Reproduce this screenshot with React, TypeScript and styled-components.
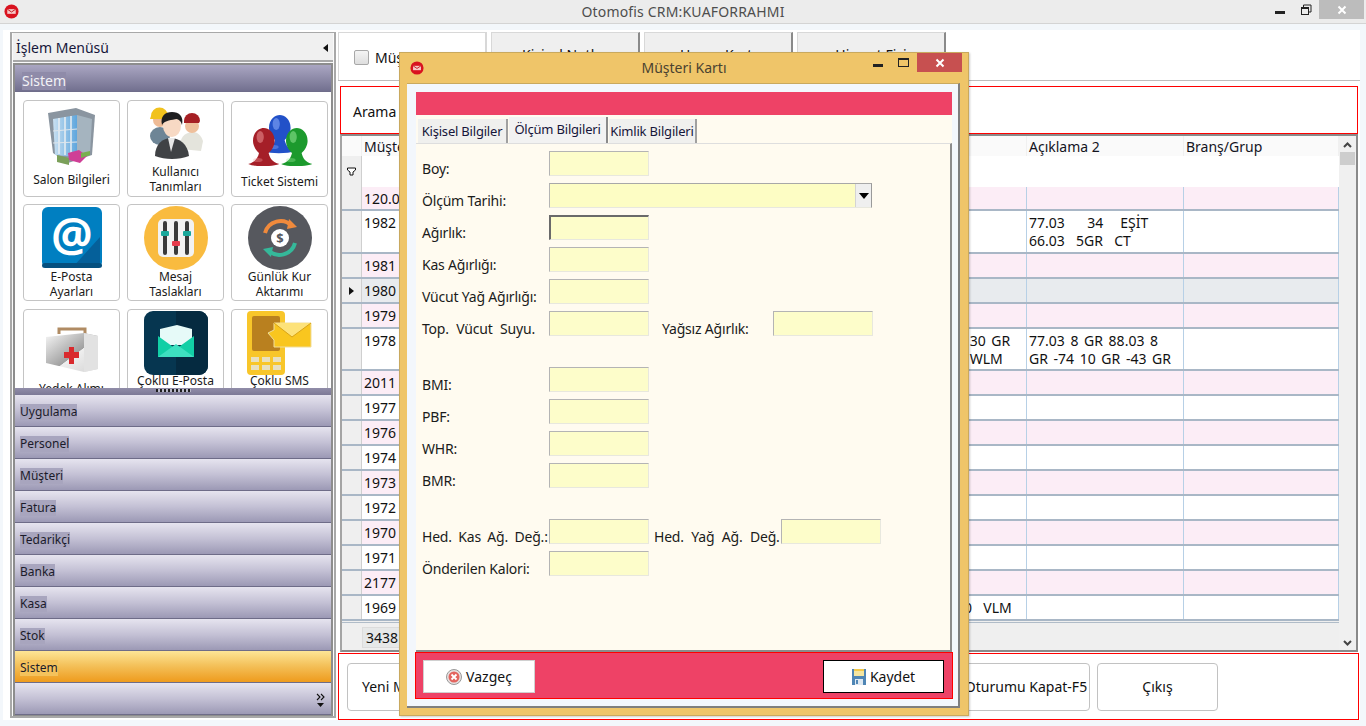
import React from "react";
import styled, { createGlobalStyle } from "styled-components";

const Global = createGlobalStyle`
  html, body { margin: 0; padding: 0; background: #f3f7fb; overflow: hidden; }
  * { box-sizing: border-box; }
  #root { width: 1366px; height: 726px; }
`;

const FONT = `"Noto Sans", "Open Sans", "DejaVu Sans", sans-serif`;

const Desktop = styled.div`
  position: relative; width: 1366px; height: 726px; overflow: hidden;
  background: #f3f7fb; color: #111; font: 14px/18px ${FONT};
`;
const TitleBar = styled.div`
  height: 24px; background: #ececec; border-bottom: 1px solid #d4d4d4;
  display: flex; align-items: center; position: relative; padding-left: 4px;
`;
const TitleText = styled.div`
  position: absolute; left: 0; right: 0; top: 3px; text-align: center; color: #4e4e4e; font-size: 14px; line-height: 18px; letter-spacing: 0.18px;
`;
const WinControls = styled.div`
  position: absolute; right: 2px; top: 0; display: flex; align-items: flex-start;
`;
const CtlBtn = styled.div<{ $w: number; $bg?: string }>`
  width: ${p => p.$w}px; height: 19px; background: ${p => p.$bg || "transparent"};
  display: flex; align-items: center; justify-content: center;
`;
const Panel = styled.div`
  position: absolute; left: 3px; top: 30px; width: 1357px; height: 690px; background: #fff;
  display: flex; gap: 2px; padding: 2px 0 0 7px;
`;

/* sidebar */
const Sidebar = styled.div`
  width: 326px; height: 686px; border: 2px solid #a8a8a8; border-top-width: 1px; padding: 0 1px;
  display: flex; flex-direction: column; background: #fafafa;
`;
const MenuHead = styled.div`
  height: 29px; background: #f0f0f0; display: flex; align-items: center; justify-content: space-between;
  padding: 2px 4px 0 3px; font-size: 14px; color: #16163a; border-bottom: 2px solid #a8a8a8;
`;
const MenuInner = styled.div`
  flex: none; margin-top: 1px; height: 653px; width: 320px; border: 2px solid #8d8d8d; border-bottom-width: 1px;
  display: flex; flex-direction: column; overflow: hidden; background: #fff;
`;
const GroupHead = styled.div`
  height: 27px; flex: none; padding: 5px 0 0 7px; display: flex; align-items: center;
  background: linear-gradient(#aaa6c2, #72708f); border-bottom: 1px solid #6f6d8a;
`;
const GroupLabel = styled.span`
  background: #8f8ba9; color: #f2f2f6; font-size: 14px; line-height: 18px;
`;
const IconArea = styled.div`
  height: 296px; flex: none; overflow: hidden; background: #fff; padding: 8px 0 0 8px;
  display: grid; grid-template-columns: repeat(3, 97px); grid-auto-rows: 97px; gap: 7px;
`;
const IconCard = styled.div<{ $shift?: number }>`
  border: 1px solid #c4c4c4; border-radius: 4px; background: #fff;
  display: flex; flex-direction: column; align-items: center;
  margin-top: ${p => p.$shift || 0}px; height: ${p => (p.$shift === 1 ? 96 : 97)}px;
  font-size: 12px; line-height: 15px; color: #1a1a1a; text-align: center;
`;
const IconSlot = styled.div<{ $top: number; $h: number }>`
  margin-top: ${p => p.$top}px; height: ${p => p.$h}px; flex: none; display: flex; justify-content: center;
`;
const GripBar = styled.div`
  height: 7px; flex: none; background: linear-gradient(#918da9, #7c7996); display: flex; justify-content: center; align-items: flex-start; padding-top: 1px;
`;
const GripDots = styled.div`
  width: 35px; height: 3px;
  background: repeating-linear-gradient(90deg, #1e1e1e 0 2px, #b8b8c8 2px 4px);
`;
const NavRow = styled.div<{ $active?: boolean }>`
  height: 32px; flex: none; display: flex; align-items: center; justify-content: space-between;
  padding: 2px 6px 0 5px; font-size: 12px; color: #1b1b2a;
  background: ${p => p.$active ? "linear-gradient(#fee596, #f4c25c 45%, #ee9b1d)" : "linear-gradient(#e6e4ef, #c4c1d5 50%, #9c99b5)"};
  border-bottom: 1px solid #6e6c88;
`;
const NavLabel = styled.span<{ $active?: boolean }>`
  background: ${p => p.$active ? "#f4c25c" : "#a8a5be"}; line-height: 16px;
`;

/* main */
const Main = styled.div`
  width: 1022px; height: 688px; display: flex; flex-direction: column; background: #fff;
`;
const TabRow = styled.div`
  height: 49px; flex: none; display: flex; gap: 4px; border-bottom: 1px solid #bdbdbd; padding-left: 0;
`;
const PageTab = styled.div<{ $active?: boolean }>`
  width: 149px; height: 48px; display: flex; align-items: center; gap: 6px; font-size: 14px;
  padding: ${p => p.$active ? "2px 0 0 15px" : "0 0 4px 0"};
  background: ${p => p.$active ? "#fff" : "#efefef"};
  border: 1px solid #d8d8d8; border-right: 2px solid ${p => p.$active ? "#d8d8d8" : "#8a8a8a"}; border-bottom: none;
  justify-content: ${p => p.$active ? "flex-start" : "center"};
`;
const CheckBox = styled.span`
  width: 15px; height: 15px; background: linear-gradient(#f4f4f4, #dedede); border: 1px solid #a8a8a8; border-radius: 2px;
`;
const SearchBox = styled.div`
  height: 48px; margin: 5px 2px 0 2px; flex: none; border: 1px solid #f00; padding: 16px 0 0 12px; font-size: 14px;
`;
const GridFrame = styled.div`
  height: 518px; width: 1018px; margin-left: 2px; flex: none; display: flex;
  border: 2px solid #8a8a8a; border-left-color: #a4a4a4; background: #efefef;
`;
const GridBody = styled.div`
  width: 997px; flex: none; display: flex; flex-direction: column; background: #efefef;
`;
const columns = "20px 48px 552px 65px 157px 155px";
const HeadRow = styled.div`
  height: 20px; flex: none; display: grid; grid-template-columns: ${columns}; background: #fafafa;
`;
const HeadCell = styled.div`
  padding: 2px 2px 0; font-size: 14px; line-height: 18px; white-space: nowrap; overflow: hidden; color: #14141e;
  border-right: 1px solid #f0f0f0;
`;
const FilterRow = styled.div`
  height: 31px; flex: none; display: grid; grid-template-columns: ${columns}; background: #fff;
`;
const IndicatorCell = styled.div`
  background: #efefef; border-right: 1px solid #cfcfcf; display: flex; align-items: center; justify-content: center;
`;
const DataRow = styled.div<{ $h: number; $pink?: boolean; $sel?: boolean }>`
  height: ${p => p.$h}px; flex: none; display: grid; grid-template-columns: ${columns};
  background: ${p => p.$sel ? "#e8ebee" : p.$pink ? "#fcedf6" : "#fff"};
  border-bottom: 2px solid #a9b7c6;
`;
const DataCell = styled.div`
  padding: 3px 2px 0; font-size: 14px; line-height: 18px; white-space: pre-wrap; color: #111; word-spacing: 2px;
  border-right: 1px solid #b7d0e6;
`;
const FootRow = styled.div`
  flex: 1; margin-top: 1px; border-top: 1px solid #b0bcc8; padding: 4px 0 0 20px; background: #efefef;
`;
const FootCell = styled.div`
  width: 41px; height: 21px; background: #e6e8e8; border: 1px solid #dcdcdc; padding: 1px 0 0 3px; font-size: 14px; line-height: 18px;
`;
const ScrollBar = styled.div`
  flex: 1; background: #f0f0f0; position: relative; display: flex; flex-direction: column; align-items: center;
  justify-content: space-between; padding: 6px 0 4px;
`;
const ScrollThumb = styled.div`
  position: absolute; top: 16px; left: 1px; width: 15px; height: 13px; background: #cdcdcd;
`;
const BottomBar = styled.div`
  height: 67px; flex: none; margin-top: 1px; border: 1px solid #f00; display: flex; gap: 7px; padding: 9px 0 0 8px; width: 1021px;
`;
const ActionBtn = styled.div<{ $w: number; $left?: boolean }>`
  width: ${p => p.$w}px; height: 48px; border: 1px solid #c2c2c2; border-radius: 4px; background: #fff;
  display: flex; align-items: center; justify-content: ${p => p.$left ? "flex-start" : "center"};
  padding-left: ${p => p.$left ? 14 : 0}px; font-size: 14px; white-space: nowrap; overflow: hidden;
`;

/* dialog */
const Dialog = styled.div`
  position: absolute; left: 399px; top: 52px; width: 570px; height: 664px; background: #efc569;
  border: 1px solid #c9a95e; box-shadow: 1px 1px 2px rgba(0,0,0,.2); display: flex; flex-direction: column;
`;
const DlgTitle = styled.div`
  height: 30px; flex: none; position: relative; display: flex; align-items: center; padding-left: 10px;
`;
const DlgTitleText = styled.div`
  position: absolute; left: 0; right: 0; top: 6px; text-align: center; color: #4a4230; font-size: 14px; line-height: 18px;
`;
const DlgControls = styled.div`
  position: absolute; right: 6px; top: 0; display: flex;
`;
const Client = styled.div`
  width: 553px; height: 625px; margin-left: 7px; background: #f3f7fc; display: flex; flex-direction: column;
  padding: 8px 6px 7px 9px; border-right: 2px solid #7f7f7f; border-bottom: 2px solid #7f7f7f; border-top: 1px solid #c9a95e;
`;
const RedBand = styled.div`
  height: 23px; flex: none; background: #ee4266;
`;
const Cream = styled.div`
  flex: 1; background: #fffbf0; display: flex; flex-direction: column;
`;
const DlgTabs = styled.div`
  height: 28px; flex: none; display: flex; align-items: flex-end; padding-left: 2px; gap: 1px;
`;
const DlgTab = styled.div<{ $w: number; $active?: boolean }>`
  width: ${p => p.$w}px; height: ${p => p.$active ? 26 : 24}px; font-size: 13px; line-height: 24px; letter-spacing: -0.2px; text-align: center;
  background: ${p => p.$active ? "#f2f2f2" : "#f0f0ee"}; color: #16163a; white-space: nowrap;
  border-right: 2px solid ${p => p.$active ? "#8a8a8a" : "#a0a0a0"};
`;
const Form = styled.div`
  flex: 1; border-top: 1px solid #dedede; border-right: 2px solid #8c8c8c; border-bottom: 2px solid #8c8c8c;
  padding: 7px 0 0 6px; display: flex; flex-direction: column; gap: 7px;
`;
const FieldRow = styled.div<{ $gapTop?: number }>`
  height: 25px; flex: none; display: flex; align-items: flex-start; margin-top: ${p => p.$gapTop || 0}px;
`;
const FieldLabel = styled.div<{ $w?: number; $ml?: number; $ws?: number }>`
  width: ${p => p.$w || 127}px; margin-left: ${p => p.$ml || 0}px; flex: none; font-size: 14px; line-height: 18px; padding-top: 9px;
  color: #1b1b1b; white-space: nowrap; letter-spacing: -0.2px; word-spacing: ${p => p.$ws || 0}px;
`;
const FieldInput = styled.div<{ $focus?: boolean }>`
  width: 100px; height: 25px; flex: none; background: #fdfdca;
  border-top: ${p => p.$focus ? "2px solid #6a6a6a" : "1px solid #b4b4b4"};
  border-left: ${p => p.$focus ? "2px solid #6a6a6a" : "1px solid #b4b4b4"};
  border-right: 1px solid #e8e8de; border-bottom: 1px solid #e8e8de;
`;
const FieldSelect = styled.div`
  width: 323px; height: 25px; flex: none; background: #fdfdc4; display: flex; justify-content: flex-end;
  border-top: 1px solid #a8a8a8; border-left: 1px solid #b4b4b4; border-right: 1px solid #9a9a9a; border-bottom: 1px solid #e8e8de;
`;
const SelectArrow = styled.div`
  width: 16px; background: #efefef; border-left: 1px solid #d4d4d4; display: flex; align-items: center; justify-content: center;
`;
const DlgFooter = styled.div`
  height: 47px; flex: none; margin: 0 -1px; background: #ee4266; border: 1px solid #f00;
  display: flex; justify-content: space-between; align-items: flex-start; padding: 7px 8px 0 7px;
`;
const DlgBtn = styled.div<{ $w: number; $strong?: boolean }>`
  width: ${p => p.$w}px; height: 33px; background: #fff; display: flex; align-items: center; justify-content: center; gap: 4px;
  font-size: 14px; color: #111; border: 1px solid ${p => p.$strong ? "#000" : "#d0d0d0"};
`;

/* drawings */
const AppLogo = ({ s = 15 }: { s?: number }) => (
  <svg width={s} height={s} viewBox="0 0 16 16">
    <circle cx="8" cy="8" r="7.5" fill="#d9121f" />
    <path d="M3.5 5.5h9v5h-9z" fill="#f6c8c8" />
    <path d="M3.5 5.5L8 8.5l4.500-3" fill="none" stroke="#c01018" strokeWidth="1" />
  </svg>
);
const MinIcon = () => <svg width="12" height="10"><rect x="1" y="6" width="10" height="3" fill="#222" /></svg>;
const RestoreIcon = () => (
  <svg width="12" height="12"><path d="M3.5 3V1h7.500v7H9" fill="none" stroke="#222" /><rect x="1.500" y="3.500" width="7" height="7" fill="none" stroke="#222" /><rect x="1" y="3" width="8" height="2" fill="#222" /></svg>
);
const MaxIcon = () => <svg width="12" height="10"><rect x=".5" y=".5" width="10" height="8" fill="none" stroke="#222" /><rect width="11" height="2" fill="#222" /></svg>;
const CloseIcon = () => <svg width="10" height="10"><path d="M1.500 1.500l7 7M8.500 1.500l-7 7" stroke="#fff" strokeWidth="2" /></svg>;

const SalonIcon = () => (
  <svg width="50" height="60" viewBox="0 0 50 60">
    <defs><linearGradient id="gl" x1="0" x2="1"><stop offset="0" stopColor="#c9e0f1" /><stop offset="1" stopColor="#5ea6dd" /></linearGradient></defs>
    <path d="M1 6L29 1l19 7-3 40-24 8L6 46z" fill="#8a95a0" />
    <path d="M6 12l24 -4 0 42-22 -2z" fill="url(#gl)" />
    <path d="M30 8l15 4-2 34-13 4z" fill="#a5b4bf" />
    <path d="M12 11v36M18 10v38M24 9v40" stroke="#e9eef2" strokeWidth="1.500" />
    <path d="M6 24l24-2M6 36l24-1" stroke="#dfe6ec" />
    <path d="M10 48l12 3v7l-12-3z" fill="#7ba05a" />
    <path d="M21 46l11-3 8 6-7 7-11-3z" fill="#cf3f96" />
    <path d="M34 46l9-2v4l-9 3z" fill="#79b04f" />
  </svg>
);
const UsersIcon = () => (
  <svg width="56" height="56" viewBox="0 0 56 56">
    <ellipse cx="12" cy="30" rx="10" ry="9" fill="#6e8596" />
    <circle cx="12" cy="14" r="7" fill="#eebb96" />
    <path d="M3 10a8 8 0 0 1 17 0l1 3H2z" fill="#f1c21e" />
    <path d="M33 34c2-6 8-8 12-8s8 3 10 9l-2 10-20-2z" fill="#e4e4dc" />
    <circle cx="44" cy="20" r="7" fill="#efc09c" />
    <path d="M36 15a8 8 0 0 1 16 0l-1 2H36z" fill="#a61f24" />
    <path d="M7 50c0-12 8-18 16-18s17 6 18 18c-10 4-24 4-34 0z" fill="#404245" />
    <path d="M20 32l3 14 4-14z" fill="#e8e8e8" />
    <ellipse cx="24" cy="20" rx="9" ry="11" fill="#f7d9c4" />
    <path d="M14 19c-2-9 3-13 10-13s12 4 10 13c-1-4-3-5-5-6-5 1-12 1-15 6z" fill="#1d1d1f" />
  </svg>
);
const TicketIcon = () => {
  const fig = (x: number, y: number, c: string, d: string) => (
    <g transform={`translate(${x} ${y}) scale(1.2 1)`}>
      <path d="M1 37c6-2 8-6 9-11-3-3-5-8-5-12C5 5 10 1 14 1s9 4 9 13c0 4-2 9-5 12 1 5 3 9 9 11-7 3-21 3-26 0z" fill={c} />
      <ellipse cx="11" cy="10" rx="3" ry="6" fill={d} opacity=".5" />
      <ellipse cx="9" cy="33" rx="4" ry="2" fill={d} opacity=".35" />
    </g>
  );
  return (
    <svg width="66" height="52" viewBox="0 0 66 52">
      {fig(16, 0, "#2251c8", "#9ab8ff")}
      {fig(0, 13, "#a51f28", "#f3a0a0")}
      {fig(33, 13, "#1c9a2d", "#a0eea0")}
    </svg>
  );
};
const AtIcon = () => (
  <svg width="60" height="61" viewBox="0 0 60 61">
    <rect width="60" height="61" rx="6" fill="#007fc1" />
    <path d="M30 61L58 30v25a6 6 0 0 1-6 6z" fill="#05609a" />
    <rect y="56" width="60" height="5" rx="3" fill="#05507f" />
    <text x="30" y="44" textAnchor="middle" fontFamily={FONT} fontSize="46" fontWeight="700" fill="#fff">@</text>
  </svg>
);
const MixerIcon = () => (
  <svg width="64" height="64" viewBox="0 0 64 64">
    <circle cx="32" cy="32" r="32" fill="#f9bb3f" />
    <rect x="14" y="13" width="36" height="38" rx="5" fill="#f2f2f2" />
    <path d="M21 17v30M32 17v30M43 17v30" stroke="#3a3a3a" strokeWidth="4" strokeLinecap="round" />
    <rect x="17" y="25" width="8" height="5" rx="1" fill="#19a79a" />
    <rect x="28" y="35" width="8" height="5" rx="1" fill="#e63b4d" />
    <rect x="39" y="25" width="8" height="5" rx="1" fill="#19a79a" />
  </svg>
);
const KurIcon = () => (
  <svg width="64" height="64" viewBox="0 0 64 64">
    <circle cx="32" cy="32" r="32" fill="#56585e" />
    <path d="M17 27a16 16 0 0 1 27-7" fill="none" stroke="#f08a3c" strokeWidth="4" />
    <path d="M41 13l8 8-10 2z" fill="#f08a3c" />
    <path d="M47 37a16 16 0 0 1-27 7" fill="none" stroke="#35b89a" strokeWidth="4" />
    <path d="M23 51l-8-8 10-2z" fill="#35b89a" />
    <circle cx="32" cy="32" r="9" fill="#fff" />
    <text x="32" y="37" textAnchor="middle" fontFamily={FONT} fontSize="13" fontWeight="700" fill="#56585e">$</text>
  </svg>
);
const AidIcon = () => (
  <svg width="54" height="48" viewBox="0 0 54 48">
    <defs><linearGradient id="ai" x1="0" y1="0" x2="1" y2="1"><stop offset="0" stopColor="#f7f7f7" /><stop offset=".55" stopColor="#a0a0a0" /><stop offset=".56" stopColor="#efefef" /><stop offset="1" stopColor="#d2d2d2" /></linearGradient></defs>
    <path d="M14 9V4h26v5" fill="none" stroke="#b08b63" strokeWidth="3" />
    <path d="M1 12l38-4 14 3v33l-14 3L1 38z" fill="url(#ai)" />
    <path d="M39 8v39l14-3V11z" fill="#e2e2e2" />
    <path d="M19 27h5v-5h5v5h5v6h-5v6h-5v-6h-5z" fill="#d92a2e" />
  </svg>
);
const MailTileIcon = () => (
  <svg width="64" height="64" viewBox="0 0 64 64">
    <rect width="64" height="64" rx="9" fill="#063650" />
    <path d="M32 0h23a9 9 0 0 1 9 9v46a9 9 0 0 1-9 9H32z" fill="#052a40" />
    <path d="M16 18l17-4 15 4v16H16z" fill="#e6faf8" />
    <path d="M14 25l18 13 18-13v21H14z" fill="#12cfa6" />
    <path d="M14 46l18-13 18 13z" fill="#3ee0c0" />
  </svg>
);
const SmsIcon = () => (
  <svg width="66" height="64" viewBox="0 0 66 64">
    <rect width="38" height="64" rx="4" fill="#f8c62a" />
    <rect x="5" y="5" width="28" height="35" rx="2" fill="#b9801f" />
    <rect x="4" y="46" width="8" height="5" fill="#e8e0c0" /><rect x="15" y="46" width="8" height="5" fill="#e8e0c0" /><rect x="26" y="46" width="8" height="5" fill="#e8e0c0" />
    <rect x="4" y="54" width="8" height="5" fill="#e8e0c0" /><rect x="15" y="54" width="8" height="5" fill="#e8e0c0" /><rect x="26" y="54" width="8" height="5" fill="#e8e0c0" />
    <path d="M21 22l6-3V12h37v24H27v-7z" fill="#f9c61f" stroke="#f0dd9a" />
    <path d="M27 12l18 14 19-14" fill="#fde27a" stroke="#d9a417" />
  </svg>
);
const FilterIcon = () => (
  <svg width="9" height="9" viewBox="0 0 9 9"><path d="M.5 1h8v2L6 5v3H3V5L.5 3z" fill="#fff" stroke="#111" /></svg>
);
const ArrowLeft = () => <svg width="6" height="8"><path d="M5 0v8L0 4z" fill="#111" /></svg>;
const RowArrow = () => <svg width="5" height="8"><path d="M0 0l5 4-5 4z" fill="#111" /></svg>;
const DownTri = () => <svg width="10" height="6"><path d="M0 0h10L5 6z" fill="#000" /></svg>;
const Chevron = ({ up }: { up?: boolean }) => (
  <svg width="9" height="6"><path d={up ? "M1 5l3.500-3.500L8 5" : "M1 1l3.500 3.500L8 1"} fill="none" stroke="#444" strokeWidth="2" /></svg>
);
const MoreIcon = () => (
  <svg width="9" height="15" viewBox="0 0 9 15" style={{ marginTop: 2 }}>
    <path d="M1 1l3 3-3 3M5 1l3 3-3 3" fill="none" stroke="#111" strokeWidth="1.100" />
    <path d="M1 10h7l-3.500 4z" fill="#111" />
  </svg>
);
const CancelIcon = () => (
  <svg width="16" height="16" viewBox="0 0 16 16">
    <circle cx="8" cy="8" r="7.500" fill="#e7e2e2" stroke="#999" />
    <circle cx="8" cy="8" r="5.500" fill="#e3655f" />
    <path d="M5.500 5.500l5 5M10.500 5.500l-5 5" stroke="#fff" strokeWidth="1.800" />
  </svg>
);
const SaveIcon = () => (
  <svg width="14" height="16" viewBox="0 0 14 16">
    <rect width="14" height="16" fill="#4f86b5" />
    <rect x="2" y="0" width="10" height="7" fill="#f5e6a0" />
    <rect x="2" y="0" width="10" height="2" fill="#f3c94a" />
    <rect x="3" y="10" width="8" height="6" fill="#dfe9f2" />
    <rect x="4" y="11" width="2" height="4" fill="#4f86b5" />
  </svg>
);

const cards = [
  { label: ["Salon Bilgileri"], top: 6, h: 65, icon: <SalonIcon /> },
  { label: ["Kullanıcı", "Tanımları"], top: 5, h: 58, icon: <UsersIcon /> },
  { label: ["Ticket Sistemi"], top: 12, h: 60, icon: <TicketIcon />, shift: 1 },
  { label: ["E-Posta", "Ayarları"], top: 2, h: 62, icon: <AtIcon /> },
  { label: ["Mesaj", "Taslakları"], top: 1, h: 63, icon: <MixerIcon /> },
  { label: ["Günlük Kur", "Aktarımı"], top: 1, h: 63, icon: <KurIcon /> },
  { label: ["Yedek Alımı"], top: 15, h: 56, icon: <AidIcon />, shift: 1 },
  { label: ["Çoklu E-Posta"], top: 1, h: 62, icon: <MailTileIcon />, shift: 1 },
  { label: ["Çoklu SMS"], top: 1, h: 62, icon: <SmsIcon />, shift: 1 },
];
const navItems = ["Uygulama", "Personel", "Müşteri", "Fatura", "Tedarikçi", "Banka", "Kasa", "Stok", "Sistem", ""];

const rows = [
  { no: "120.0", h: 24, pink: true },
  { no: "1982", h: 43, a2: "77.03    34   EŞİT\n66.03  5GR  CT" },
  { no: "1981", h: 25, pink: true },
  { no: "1980", h: 25, sel: true },
  { no: "1979", h: 25, pink: true },
  { no: "1978", h: 42, a1: "\u00A030 GR\n\u00A0WLM", a2: "77.03 8 GR 88.03 8\nGR -74 10 GR -43 GR" },
  { no: "2011", h: 25, pink: true },
  { no: "1977", h: 25 },
  { no: "1976", h: 25, pink: true },
  { no: "1974", h: 25 },
  { no: "1973", h: 25, pink: true },
  { no: "1972", h: 25 },
  { no: "1970", h: 25, pink: true },
  { no: "1971", h: 25 },
  { no: "2177", h: 25, pink: true },
  { no: "1969", h: 25, a1: "0  VLM" },
];

const Field = ({ label, focus, ws }: { label: string; focus?: boolean; ws?: number }) => (
  <>
    <FieldLabel $ws={ws}>{label}</FieldLabel>
    <FieldInput $focus={focus} />
  </>
);

export default function App() {
  return (
    <Desktop>
      <Global />
      <TitleBar>
        <AppLogo />
        <TitleText>Otomofis CRM:KUAFORRAHMI</TitleText>
        <WinControls>
          <CtlBtn $w={27}><MinIcon /></CtlBtn>
          <CtlBtn $w={26}><RestoreIcon /></CtlBtn>
          <CtlBtn $w={45} $bg="#bcbcbc"><CloseIcon /></CtlBtn>
        </WinControls>
      </TitleBar>

      <Panel>
        <Sidebar>
          <MenuHead>İşlem Menüsü<ArrowLeft /></MenuHead>
          <MenuInner>
            <GroupHead><GroupLabel>Sistem</GroupLabel></GroupHead>
            <IconArea>
              {cards.map(c => (
                <IconCard key={c.label[0]} $shift={c.shift}>
                  <IconSlot $top={c.top} $h={c.h}>{c.icon}</IconSlot>
                  {c.label.map(l => <div key={l}>{l}</div>)}
                </IconCard>
              ))}
            </IconArea>
            <GripBar><GripDots /></GripBar>
            {navItems.map((n, i) => (
              <NavRow key={i} $active={n === "Sistem"}>
                {n ? <NavLabel $active={n === "Sistem"}>{n}</NavLabel> : <span />}
                {!n && <MoreIcon />}
              </NavRow>
            ))}
          </MenuInner>
        </Sidebar>

        <Main>
          <TabRow>
            <PageTab $active><CheckBox />Müşteri</PageTab>
            <PageTab>Kişisel Notlar</PageTab>
            <PageTab>Hesap Kartı</PageTab>
            <PageTab>Hizmet Fişi</PageTab>
          </TabRow>
          <SearchBox>Arama</SearchBox>
          <GridFrame>
            <GridBody>
              <HeadRow>
                <HeadCell />
                <HeadCell>Müşteri</HeadCell>
                <HeadCell>Adı Soyadı</HeadCell>
                <HeadCell />
                <HeadCell>Açıklama 2</HeadCell>
                <HeadCell>Branş/Grup</HeadCell>
              </HeadRow>
              <FilterRow>
                <IndicatorCell><FilterIcon /></IndicatorCell>
              </FilterRow>
              {rows.map(r => (
                <DataRow key={r.no} $h={r.h} $pink={r.pink} $sel={r.sel}>
                  <IndicatorCell>{r.sel && <RowArrow />}</IndicatorCell>
                  <DataCell>{r.no}</DataCell>
                  <DataCell />
                  <DataCell>{r.a1}</DataCell>
                  <DataCell>{r.a2}</DataCell>
                  <DataCell />
                </DataRow>
              ))}
              <FootRow><FootCell>3438</FootCell></FootRow>
            </GridBody>
            <ScrollBar>
              <Chevron up />
              <ScrollThumb />
              <Chevron />
            </ScrollBar>
          </GridFrame>
          <BottomBar>
            <ActionBtn $w={116} $left>Yeni Müşteri</ActionBtn>
            <ActionBtn $w={116}>Düzenle</ActionBtn>
            <ActionBtn $w={116}>Sil</ActionBtn>
            <ActionBtn $w={116}>Yazdır</ActionBtn>
            <ActionBtn $w={116}>Yenile</ActionBtn>
            <ActionBtn $w={128}>Oturumu Kapat-F5</ActionBtn>
            <ActionBtn $w={121}>Çıkış</ActionBtn>
          </BottomBar>
        </Main>
      </Panel>

      <Dialog>
        <DlgTitle>
          <AppLogo s={14} />
          <DlgTitleText>Müşteri Kartı</DlgTitleText>
          <DlgControls>
            <CtlBtn $w={27}><MinIcon /></CtlBtn>
            <CtlBtn $w={26}><MaxIcon /></CtlBtn>
            <CtlBtn $w={45} $bg="#c75050"><CloseIcon /></CtlBtn>
          </DlgControls>
        </DlgTitle>
        <Client>
          <RedBand />
          <Cream>
            <DlgTabs>
              <DlgTab $w={90}>Kişisel Bilgiler</DlgTab>
              <DlgTab $w={99} $active>Ölçüm Bilgileri</DlgTab>
              <DlgTab $w={88}>Kimlik Bilgileri</DlgTab>
            </DlgTabs>
            <Form>
              <FieldRow><Field label="Boy:" /></FieldRow>
              <FieldRow>
                <FieldLabel>Ölçüm Tarihi:</FieldLabel>
                <FieldSelect><SelectArrow><DownTri /></SelectArrow></FieldSelect>
              </FieldRow>
              <FieldRow><Field label="Ağırlık:" focus /></FieldRow>
              <FieldRow><Field label="Kas Ağırlığı:" /></FieldRow>
              <FieldRow><Field label="Vücut Yağ Ağırlığı:" /></FieldRow>
              <FieldRow>
                <Field label="Top. Vücut Suyu." ws={4} />
                <FieldLabel $w={111} $ml={13}>Yağsız Ağırlık:</FieldLabel>
                <FieldInput />
              </FieldRow>
              <FieldRow $gapTop={24}><Field label="BMI:" /></FieldRow>
              <FieldRow><Field label="PBF:" /></FieldRow>
              <FieldRow><Field label="WHR:" /></FieldRow>
              <FieldRow><Field label="BMR:" /></FieldRow>
              <FieldRow $gapTop={24}>
                <Field label="Hed. Kas Ağ. Değ.:" ws={3} />
                <FieldLabel $ml={5} $ws={4}>Hed. Yağ Ağ. Değ.</FieldLabel>
                <FieldInput />
              </FieldRow>
              <FieldRow><Field label="Önderilen Kalori:" /></FieldRow>
            </Form>
          </Cream>
          <DlgFooter>
            <DlgBtn $w={112}><CancelIcon />Vazgeç</DlgBtn>
            <DlgBtn $w={121} $strong><SaveIcon />Kaydet</DlgBtn>
          </DlgFooter>
        </Client>
      </Dialog>
    </Desktop>
  );
}
